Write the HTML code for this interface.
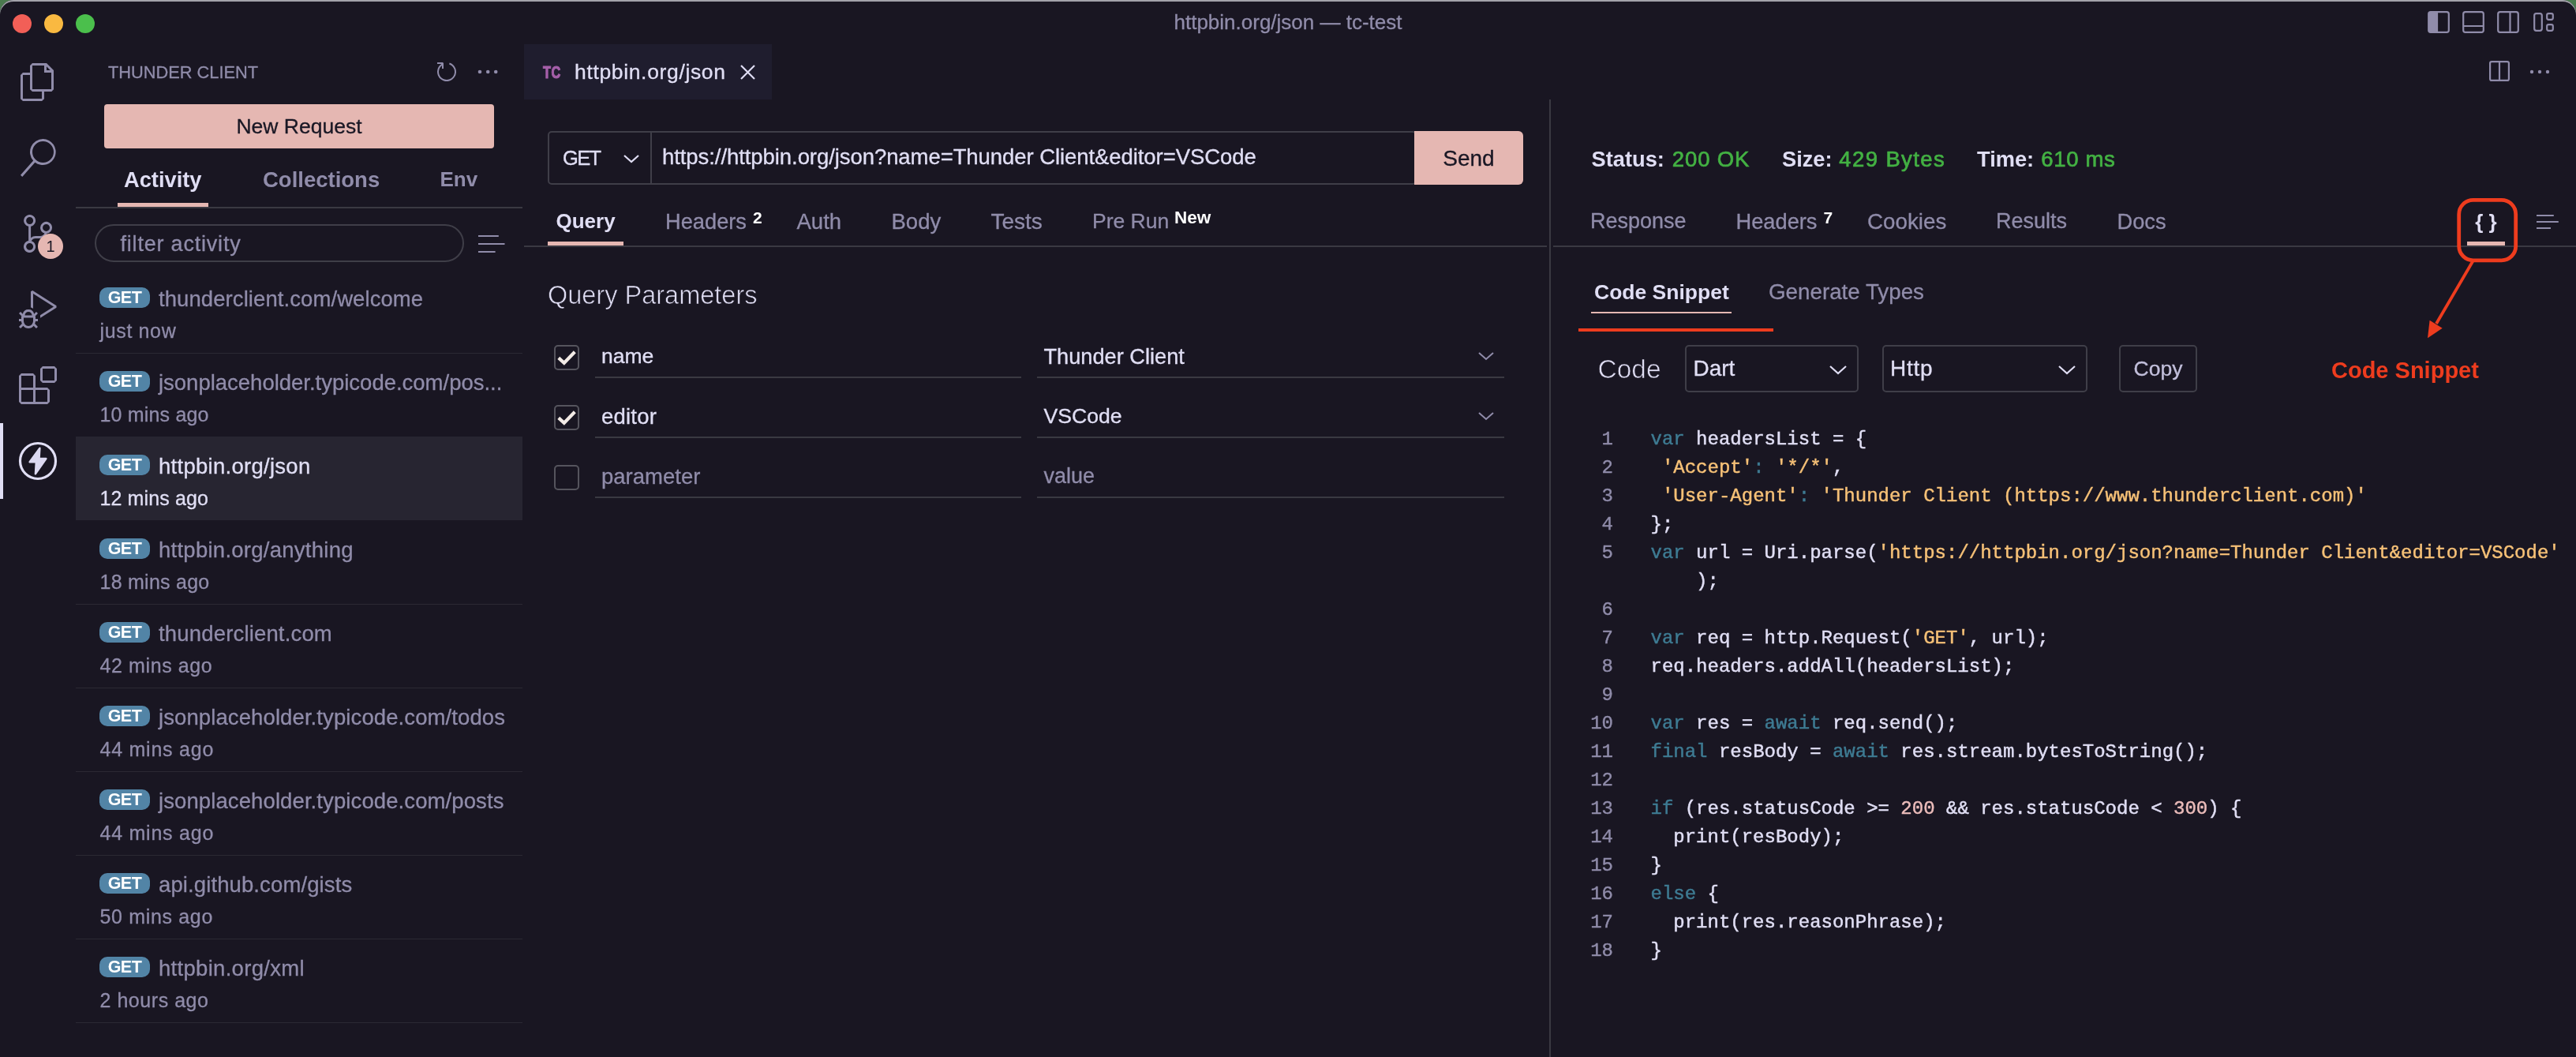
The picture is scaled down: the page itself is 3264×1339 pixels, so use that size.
<!DOCTYPE html>
<html>
<head>
<meta charset="utf-8">
<title>httpbin.org/json — tc-test</title>
<style>
html,body{margin:0;padding:0;}
body{width:3264px;height:1339px;overflow:hidden;background:#4a7a4e;font-family:"Liberation Sans",sans-serif;}
#win{position:absolute;left:0;top:0;width:3264px;height:1400px;background:#191622;border-radius:17px 17px 0 0;overflow:hidden;box-shadow:inset 0 2px 0 #a3a2aa;will-change:transform;}
.a{position:absolute;}
.t{position:absolute;white-space:nowrap;line-height:1;color:#e0def4;-webkit-text-stroke:0.3px;}
.sub{color:#908caa;}
.b{font-weight:bold;-webkit-text-stroke:0;}
.hl{position:absolute;height:2px;background:#3a3942;}
.vl{position:absolute;width:2px;background:#3a3942;}
.rose{background:#e5b7b2;}
.sep{position:absolute;left:96px;width:566px;height:1.5px;background:#2b2933;}
.badge{position:absolute;left:126px;width:64px;height:26px;border-radius:10px;background:#5284a6;color:#fff;font-weight:bold;font-size:21.5px;line-height:27px;text-align:center;letter-spacing:-0.5px;}
.url{position:absolute;left:201px;white-space:nowrap;line-height:1;font-size:27.5px;color:#908caa;-webkit-text-stroke:0.3px;}
.ago{position:absolute;left:126.5px;white-space:nowrap;line-height:1;font-size:25px;color:#908caa;letter-spacing:0.3px;-webkit-text-stroke:0.3px;}
.cb{position:absolute;left:702px;width:28px;height:28px;border:2px solid #55545d;border-radius:5px;}
.box{position:absolute;border:2px solid #3f3e48;border-radius:5px;box-sizing:border-box;}
.ico{position:absolute;}
#code{position:absolute;left:2091.5px;top:539px;-webkit-text-stroke:0.45px;font-family:"Liberation Mono",monospace;font-size:24px;line-height:36px;color:#e0def4;white-space:pre;}
#ln{position:absolute;left:1991px;width:53px;top:539px;-webkit-text-stroke:0.4px;font-family:"Liberation Mono",monospace;font-size:24px;line-height:36px;color:#908caa;white-space:pre;text-align:right;}
.k{color:#3e7b93;}
.s{color:#f6c177;}
.n{color:#ebbcba;}
</style>
</head>
<body>
<div id="win">

<!-- ===== TITLE BAR ===== -->
<div class="a" style="left:16px;top:18px;width:24px;height:24px;border-radius:50%;background:#f25f57;"></div>
<div class="a" style="left:56px;top:18px;width:24px;height:24px;border-radius:50%;background:#f9b941;"></div>
<div class="a" style="left:96px;top:18px;width:24px;height:24px;border-radius:50%;background:#4bbf4c;"></div>
<div class="t sub" style="left:1332px;width:600px;text-align:center;top:15px;font-size:26px;">httpbin.org/json — tc-test</div>


<svg class="ico" style="left:3070px;top:8px;" width="180" height="40" viewBox="0 0 180 40" fill="none" stroke="#908caa" stroke-width="2.2">
 <rect x="7.2" y="7.2" width="25.6" height="25.6" rx="2.6"/><path d="M8 8h10v24H8z" fill="#908caa" stroke="none"/><path d="M18 7v26"/>
 <rect x="51.2" y="7.2" width="25.6" height="25.6" rx="2.6"/><path d="M51 25h26"/>
 <rect x="95.2" y="7.2" width="25.6" height="25.6" rx="2.6"/><path d="M110.5 7v26"/>
 <rect x="141.2" y="9.2" width="9.6" height="21.6" rx="2.5"/><rect x="157.2" y="9.2" width="7.6" height="7.6" rx="2"/><rect x="157.2" y="23.2" width="7.6" height="7.6" rx="2"/>
</svg>
<svg class="ico" style="left:3150px;top:72px;" width="100" height="40" viewBox="0 0 100 40" fill="none" stroke="#908caa" stroke-width="2.2">
 <rect x="5.1" y="6.1" width="23.8" height="23.8" rx="2"/><path d="M17 6v24"/>
 <circle cx="58" cy="19" r="2.2" fill="#908caa" stroke="none"/><circle cx="68" cy="19" r="2.2" fill="#908caa" stroke="none"/><circle cx="78" cy="19" r="2.2" fill="#908caa" stroke="none"/>
</svg>


<!-- ===== ACTIVITY BAR ===== -->

<!-- files -->
<svg class="ico" style="left:24px;top:80px;" width="48" height="48" viewBox="0 0 24 24" fill="#908caa"><path d="M17.5 0h-9L7 1.5V6H2.5L1 7.5v15.07L2.5 24h12.07L16 22.57V18h4.7l1.3-1.43V4.5L17.5 0zm0 2.12l2.38 2.38H17.5V2.12zm-3 20.38h-12v-15H7v9.07L8.5 18h6v4.5zm6-6h-12v-15H16V6h4.5v10.5z"/></svg>
<!-- search -->
<svg class="ico" style="left:24px;top:176px;" width="48" height="48" viewBox="0 0 24 24" fill="#908caa"><path d="M15.25 0a8.25 8.25 0 0 0-6.18 13.72L1 22.88l1.12 1.12 8.05-9.12A8.251 8.251 0 1 0 15.25.01V0zm0 15a6.75 6.75 0 1 1 0-13.5 6.75 6.75 0 0 1 0 13.5z"/></svg>
<!-- source control -->
<svg class="ico" style="left:24px;top:272px;" width="48" height="48" viewBox="0 0 24 24" fill="#908caa"><path d="M21.007 8.222A3.738 3.738 0 0 0 15.045 5.2a3.737 3.737 0 0 0 1.156 6.583 2.988 2.988 0 0 1-2.668 1.67h-2.99a4.456 4.456 0 0 0-2.989 1.165V7.4a3.737 3.737 0 1 0-1.494 0v9.117a3.776 3.776 0 1 0 1.816.099 2.99 2.99 0 0 1 2.668-1.667h2.99a4.484 4.484 0 0 0 4.223-3.039 3.736 3.736 0 0 0 3.25-3.687zM4.565 3.738a2.242 2.242 0 1 1 4.484 0 2.242 2.242 0 0 1-4.484 0zm4.484 16.441a2.242 2.242 0 1 1-4.484 0 2.242 2.242 0 0 1 4.484 0zm8.221-9.715a2.242 2.242 0 1 1 0-4.485 2.242 2.242 0 0 1 0 4.485z"/></svg>
<div class="a" style="left:48px;top:296px;width:32px;height:32px;border-radius:50%;background:#e5b7b2;color:#191724;font-size:20px;line-height:33px;text-align:center;">1</div>
<!-- debug -->
<svg class="ico" style="left:24px;top:368px;" width="48" height="48" viewBox="0 0 24 24" fill="#908caa"><path d="M10.94 13.5l-1.32 1.32a3.73 3.73 0 0 0-7.24 0L1.06 13.5 0 14.56l1.72 1.72-.22.22V18H0v1.5h1.5v.08c.077.489.214.966.41 1.42L0 22.94 1.06 24l1.65-1.65A4.308 4.308 0 0 0 6 24a4.31 4.31 0 0 0 3.29-1.65L10.94 24 12 22.94 10.09 21c.198-.464.336-.951.41-1.45v-.1H12V18h-1.5v-1.5l-.22-.22L12 14.56l-1.06-1.06zM6 13.5a2.25 2.25 0 0 1 2.25 2.25h-4.5A2.25 2.25 0 0 1 6 13.5zm3 6a3.33 3.33 0 0 1-3 3 3.33 3.33 0 0 1-3-3v-2.25h6v2.25zm14.76-9.9v1.26L13.5 17.37V15.6l8.5-5.37L9 2v9.46a5.07 5.07 0 0 0-1.5-.72V.63L8.64 0l15.12 9.6z"/></svg>
<!-- extensions -->
<svg class="ico" style="left:24px;top:464px;" width="48" height="48" viewBox="0 0 24 24" fill="#908caa"><path d="M13.5 1.5L15 0h7.5L24 1.5V9l-1.5 1.5H15L13.5 9V1.5zm1.5 0V9h7.5V1.5H15zM0 15V6l1.5-1.5H9L10.5 6v7.5H18l1.5 1.5v7.5L18 24H1.5L0 22.5V15zm9-1.5V6H1.5v7.5H9zM9 15H1.5v7.5H9V15zm1.5 7.5H18V15h-7.5v7.5z"/></svg>
<!-- thunder client (active) -->
<div class="a" style="left:0;top:536px;width:4px;height:96px;background:#e0def4;"></div>
<svg class="ico" style="left:22px;top:558px;" width="52" height="52" viewBox="0 0 52 52"><circle cx="26" cy="26" r="22.5" fill="none" stroke="#e0def4" stroke-width="3.2"/><path d="M28.4 9.8 L15.6 27.2 H23.8 L22.9 42.3 L36.4 23 H27.6 Z" fill="#dcd9f1" stroke="#dcd9f1" stroke-width="2.4" stroke-linejoin="round"/></svg>


<!-- ===== SIDEBAR ===== -->

<div class="t sub" style="left:137px;top:80.5px;font-size:21.8px;">THUNDER CLIENT</div>
<svg class="ico" style="left:550px;top:75.2px;" width="32" height="32" viewBox="0 0 16 16" fill="#908caa"><path d="M4.681 3H2V2h3.5l.5.5V6H5V4a5 5 0 1 0 4.53-.761l.302-.954A6 6 0 1 1 4.681 3z"/></svg>
<svg class="ico" style="left:598px;top:81px;" width="40" height="20" viewBox="0 0 40 20" fill="#908caa"><circle cx="10" cy="10" r="2.3"/><circle cx="20.2" cy="10" r="2.3"/><circle cx="30.2" cy="10" r="2.3"/></svg>
<div class="a rose" style="left:132px;top:132px;width:494px;height:56px;border-radius:4px;"></div>
<div class="t" style="left:132px;width:494px;text-align:center;top:147px;font-size:26.5px;color:#191724;">New Request</div>
<div class="t b" style="left:157px;top:214px;font-size:27.25px;">Activity</div>
<div class="t b sub" style="left:333px;top:214px;font-size:27.5px;">Collections</div>
<div class="t b sub" style="left:557.5px;top:214px;font-size:26px;">Env</div>
<div class="a rose" style="left:149px;top:257px;width:115px;height:5.5px;"></div>
<div class="hl" style="left:96px;top:262px;width:566px;"></div>
<div class="a" style="left:120px;top:284px;width:464px;height:44px;border:2px solid #3f3e48;border-radius:24px;"></div>
<div class="t sub" style="left:152.5px;top:295.5px;font-size:27px;letter-spacing:0.8px;">filter activity</div>
<svg class="ico" style="left:600px;top:290px;" width="48" height="40" viewBox="0 0 48 40" stroke="#908caa" stroke-width="2.2"><path d="M6 9h25.8M6 19h33.5M6 29h21.6"/></svg>
<div class="badge" style="top:364px;">GET</div><div class="url" style="top:365px;letter-spacing:0.08px;">thunderclient.com/welcome</div><div class="ago" style="top:407px;letter-spacing:0.64px;">just now</div><div class="sep" style="top:446.5px;"></div>
<div class="badge" style="top:470px;">GET</div><div class="url" style="top:471px;letter-spacing:-0.01px;">jsonplaceholder.typicode.com/pos...</div><div class="ago" style="top:513px;letter-spacing:0.18px;">10 mins ago</div>
<div class="a" style="left:96px;top:659px;width:566px;height:0px;"></div><div class="a" style="left:96px;top:553px;width:566px;height:106px;background:#272531;"></div>
<div class="badge" style="top:576px;">GET</div><div class="url" style="top:577px;color:#e0def4;letter-spacing:0.28px;">httpbin.org/json</div><div class="ago" style="top:619px;color:#e0def4;letter-spacing:0.12px;">12 mins ago</div>
<div class="badge" style="top:682px;">GET</div><div class="url" style="top:683px;letter-spacing:0.26px;">httpbin.org/anything</div><div class="ago" style="top:725px;letter-spacing:0.25px;">18 mins ago</div><div class="sep" style="top:764.5px;"></div>
<div class="badge" style="top:788px;">GET</div><div class="url" style="top:789px;letter-spacing:0.17px;">thunderclient.com</div><div class="ago" style="top:831px;letter-spacing:0.60px;">42 mins ago</div><div class="sep" style="top:870.5px;"></div>
<div class="badge" style="top:894px;">GET</div><div class="url" style="top:895px;letter-spacing:0.10px;">jsonplaceholder.typicode.com/todos</div><div class="ago" style="top:937px;letter-spacing:0.76px;">44 mins ago</div><div class="sep" style="top:976.5px;"></div>
<div class="badge" style="top:1000px;">GET</div><div class="url" style="top:1001px;letter-spacing:0.10px;">jsonplaceholder.typicode.com/posts</div><div class="ago" style="top:1043px;letter-spacing:0.76px;">44 mins ago</div><div class="sep" style="top:1082.5px;"></div>
<div class="badge" style="top:1106px;">GET</div><div class="url" style="top:1107px;letter-spacing:0.11px;">api.github.com/gists</div><div class="ago" style="top:1149px;letter-spacing:0.66px;">50 mins ago</div><div class="sep" style="top:1188.5px;"></div>
<div class="badge" style="top:1212px;">GET</div><div class="url" style="top:1213px;letter-spacing:0.30px;">httpbin.org/xml</div><div class="ago" style="top:1255px;letter-spacing:0.54px;">2 hours ago</div><div class="sep" style="top:1294.5px;"></div>


<!-- ===== EDITOR TABS ===== -->

<div class="a" style="left:664px;top:56px;width:314px;height:70px;background:#1f1d2e;"></div>
<div class="t b" style="left:687.5px;top:80.8px;font-size:22px;color:#a55fa9;transform:scaleX(0.74);transform-origin:0 50%;letter-spacing:0.6px;-webkit-text-stroke:1.1px #a55fa9;">TC</div>
<div class="t" style="left:728px;top:78px;font-size:26.5px;letter-spacing:0.65px;">httpbin.org/json</div>
<svg class="ico" style="left:936px;top:80px;" width="24" height="24" viewBox="0 0 24 24" stroke="#e0def4" stroke-width="2.2"><path d="M3 3 L20 20 M20 3 L3 20"/></svg>


<!-- ===== REQUEST PANEL ===== -->

<div class="box" style="left:694px;top:166px;width:1101px;height:68px;"></div>
<div class="vl" style="left:824px;top:166px;height:68px;background:#3f3e48;"></div>
<div class="t" style="left:713px;top:188px;font-size:25.5px;letter-spacing:-1.7px;">GET</div>
<svg class="ico" style="left:789.0px;top:194.5px;" width="22" height="13.0" viewBox="0 0 22 13.0" fill="none" stroke="#e0def4" stroke-width="2.2"><path d="M2 2 L11.0 10.0 L20 2"/></svg>
<div class="t" style="left:839px;top:185px;font-size:27.5px;letter-spacing:-0.07px;">https://httpbin.org/json?name=Thunder Client&amp;editor=VSCode</div>
<div class="a rose" style="left:1792px;top:166px;width:138px;height:68px;border-radius:0 6px 6px 0;"></div>
<div class="t" style="left:1792px;width:138px;text-align:center;top:187px;font-size:28px;color:#191724;">Send</div>

<div class="t b" style="left:704.5px;top:267px;font-size:26px;">Query</div>
<div class="a rose" style="left:694px;top:306px;width:96px;height:5px;"></div>
<div class="t sub" style="left:843px;top:267px;font-size:27.25px;">Headers</div>
<div class="t b" style="left:954px;top:265px;font-size:21px;color:#fff;">2</div>
<div class="t sub" style="left:1009.5px;top:267px;font-size:27.5px;">Auth</div>
<div class="t sub" style="left:1129.5px;top:267px;font-size:27.5px;">Body</div>
<div class="t sub" style="left:1255.5px;top:267px;font-size:28px;">Tests</div>
<div class="t sub" style="left:1384px;top:267px;font-size:26.5px;">Pre Run</div>
<div class="t b" style="left:1488px;top:264.5px;font-size:22.5px;color:#fff;">New</div>
<div class="hl" style="left:664px;top:311px;width:1296px;"></div>
<div class="vl" style="left:1963px;top:126px;height:1300px;"></div>

<div class="t" style="left:694px;top:358px;font-size:32.5px;color:#e0def4;-webkit-text-stroke:0.7px #191622;">Query Parameters</div>
<div class="cb" style="top:437px;"></div><svg class="ico" style="left:702px;top:437px;" width="32" height="32" viewBox="0 0 32 32" fill="none" stroke="#f3ebe6" stroke-width="4.2" stroke-linejoin="miter"><path d="M5.8 16.4 L12.8 22.8 L26.3 8.8"/></svg><div class="t" style="left:762px;top:438px;font-size:26.5px;">name</div><div class="t" style="left:1322.5px;top:438px;font-size:27.2px;">Thunder Client</div><div class="hl" style="left:754px;top:477px;width:540px;"></div><div class="hl" style="left:1314px;top:477px;width:592px;"></div><svg class="ico" style="left:1871.5px;top:444.5px;" width="22" height="13.0" viewBox="0 0 22 13.0" fill="none" stroke="#908caa" stroke-width="2"><path d="M2 2 L11.0 10.0 L20 2"/></svg>
<div class="cb" style="top:513px;"></div><svg class="ico" style="left:702px;top:513px;" width="32" height="32" viewBox="0 0 32 32" fill="none" stroke="#f3ebe6" stroke-width="4.2" stroke-linejoin="miter"><path d="M5.8 16.4 L12.8 22.8 L26.3 8.8"/></svg><div class="t" style="left:762px;top:514px;font-size:27.5px;letter-spacing:0.2px;">editor</div><div class="t" style="left:1322.5px;top:514px;font-size:26.6px;">VSCode</div><div class="hl" style="left:754px;top:553px;width:540px;"></div><div class="hl" style="left:1314px;top:553px;width:592px;"></div><svg class="ico" style="left:1871.5px;top:520.5px;" width="22" height="13.0" viewBox="0 0 22 13.0" fill="none" stroke="#908caa" stroke-width="2"><path d="M2 2 L11.0 10.0 L20 2"/></svg>
<div class="cb" style="top:589px;"></div><div class="t sub" style="left:762px;top:590px;font-size:27.5px;">parameter</div><div class="t sub" style="left:1322.5px;top:590px;font-size:27px;">value</div><div class="hl" style="left:754px;top:629px;width:540px;"></div><div class="hl" style="left:1314px;top:629px;width:592px;"></div>


<!-- ===== RESPONSE PANEL ===== -->

<div class="t b" style="left:2016.5px;top:187.5px;font-size:27.25px;">Status:</div>
<div class="t" style="left:2118.8px;top:188px;font-size:27.5px;letter-spacing:0.87px;color:#43b143;-webkit-text-stroke:0.7px #43b143;">200 OK</div>
<div class="t b" style="left:2258px;top:187.5px;font-size:27.25px;">Size:</div>
<div class="t" style="left:2330.3px;top:188px;font-size:27.5px;letter-spacing:1.39px;color:#43b143;-webkit-text-stroke:0.7px #43b143;">429 Bytes</div>
<div class="t b" style="left:2505px;top:187.5px;font-size:27.25px;">Time:</div>
<div class="t" style="left:2586.3px;top:188px;font-size:27.5px;letter-spacing:0.65px;color:#43b143;-webkit-text-stroke:0.7px #43b143;">610 ms</div>

<div class="t sub" style="left:2015px;top:267px;font-size:27px;">Response</div>
<div class="t sub" style="left:2199.5px;top:267px;font-size:27.25px;">Headers</div>
<div class="t b" style="left:2310.5px;top:265px;font-size:21px;color:#fff;">7</div>
<div class="t sub" style="left:2366px;top:267px;font-size:27.75px;">Cookies</div>
<div class="t sub" style="left:2529px;top:267px;font-size:27px;">Results</div>
<div class="t sub" style="left:2682.5px;top:267px;font-size:27.25px;">Docs</div>
<div class="t b" style="left:3110px;width:80px;text-align:center;top:267.5px;font-size:26px;">{ }</div>
<div class="a rose" style="left:3126px;top:306px;width:48px;height:5px;"></div>
<svg class="ico" style="left:3208px;top:264px;" width="40" height="34" viewBox="0 0 40 34" stroke="#908caa" stroke-width="2"><path d="M6 9.1h21.8M6 16.9h27.8M6 25h18"/></svg>
<div class="hl" style="left:1968px;top:311px;width:1296px;"></div>

<div class="t b" style="left:2020px;top:356.5px;font-size:26.5px;">Code Snippet</div>
<div class="a" style="left:2016px;top:395px;width:178px;height:2px;background:#e5b7b2;"></div>
<div class="t sub" style="left:2241px;top:356px;font-size:27.75px;">Generate Types</div>

<div class="t" style="left:2024.5px;top:451px;font-size:33.5px;color:#e0def4;-webkit-text-stroke:0.7px #191622;">Code</div>
<div class="box" style="left:2135px;top:437px;width:220px;height:60px;"></div>
<div class="t" style="left:2145.5px;top:453px;font-size:28px;">Dart</div>
<svg class="ico" style="left:2316.5px;top:461.5px;" width="24" height="14.0" viewBox="0 0 24 14.0" fill="none" stroke="#e0def4" stroke-width="2.2"><path d="M2 2 L12.0 11.0 L22 2"/></svg>
<div class="box" style="left:2385px;top:437px;width:260px;height:60px;"></div>
<div class="t" style="left:2395px;top:453px;font-size:28px;letter-spacing:0.7px;">Http</div>
<svg class="ico" style="left:2606.5px;top:461.5px;" width="24" height="14.0" viewBox="0 0 24 14.0" fill="none" stroke="#e0def4" stroke-width="2.2"><path d="M2 2 L12.0 11.0 L22 2"/></svg>
<div class="box" style="left:2685px;top:437px;width:99px;height:60px;"></div>
<div class="t" style="left:2685px;width:99px;text-align:center;top:454px;font-size:26.5px;color:#c2bfdb;">Copy</div>


<!-- ===== CODE ===== -->
<div id="ln">1
2
3
4
5

6
7
8
9
10
11
12
13
14
15
16
17
18</div>
<div id="code"><span class="k">var</span> headersList = {
 <span class="s">'Accept'</span><span class="k">:</span> <span class="s">'*/*'</span>,
 <span class="s">'User-Agent'</span><span class="k">:</span> <span class="s">'Thunder Client (https://www.thunderclient.com)'</span>
};
<span class="k">var</span> url = Uri.parse(<span class="s">'https://httpbin.org/json?name=Thunder Client&amp;editor=VSCode'</span>
    );

<span class="k">var</span> req = http.Request(<span class="s">'GET'</span>, url);
req.headers.addAll(headersList);

<span class="k">var</span> res = <span class="k">await</span> req.send();
<span class="k">final</span> resBody = <span class="k">await</span> res.stream.bytesToString();

<span class="k">if</span> (res.statusCode &gt;= <span class="n">200</span> &amp;&amp; res.statusCode &lt; <span class="n">300</span>) {
  print(resBody);
}
<span class="k">else</span> {
  print(res.reasonPhrase);
}</div>


<!-- ===== ANNOTATIONS ===== -->

<svg class="ico" style="left:1990px;top:240px;" width="1274" height="280" viewBox="1990 240 1274 280" fill="none" stroke="#ee3c1e">
 <rect x="3115.7" y="253.4" width="72" height="76.4" rx="18" stroke-width="4.8"/>
 <path d="M3133.8 330 L3087 410" stroke-width="3.8"/>
 <path d="M3076 428.3 L3078.6 405.8 L3094.7 415.8 Z" fill="#ee3c1e" stroke="none"/>
 <path d="M2000 418 H2247" stroke-width="4.2"/>
</svg>
<div class="t b" style="left:2954px;top:455px;font-size:29px;color:#ee3c1e;">Code Snippet</div>


</div>
</body>
</html>
